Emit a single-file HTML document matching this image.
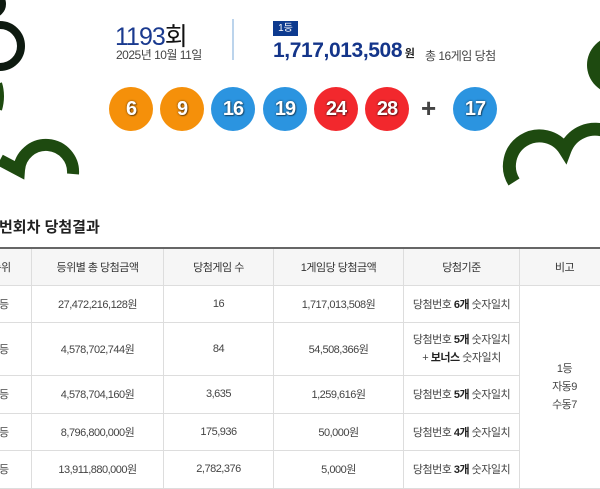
<!DOCTYPE html>
<html><head><meta charset="utf-8"><style>
*{margin:0;padding:0;box-sizing:border-box}
body{width:600px;height:489px;overflow:hidden;background:#fff;font-family:"Liberation Sans","Noto Sans CJK KR",sans-serif;position:relative;color:#333}
.a{position:absolute}
.ball{position:absolute;top:87px;width:44px;height:44px;border-radius:50%;color:#fff;font-weight:bold;font-size:20px;text-align:center;line-height:44px;letter-spacing:-1px;text-shadow:0 0 2px rgba(0,0,0,.6),1px 1px 1px rgba(0,0,0,.4)}
.o{background:#f5900a}.b{background:#2b94e0}.r{background:#f2282d}
table{position:absolute;left:-30px;top:247px;width:639px;table-layout:fixed;border-collapse:collapse;font-size:11px;color:#444;letter-spacing:-0.5px;border-top:2px solid #666}
td,th{border:1px solid #ddd;text-align:center;font-weight:normal;white-space:nowrap}
th{background:#f6f6f6;color:#333;height:37px}
b{color:#222}
</style></head><body>
<svg class="a" style="left:0;top:0" width="600" height="200">
<circle cx="0" cy="46" r="21" fill="none" stroke="#0e1a10" stroke-width="8"/>
<circle cx="-8" cy="4" r="11" fill="none" stroke="#0e1a10" stroke-width="6"/>
<path d="M0,83 Q4,96 0,110" fill="none" stroke="#1e4a10" stroke-width="4"/>
<path d="M0,160 L19,170 A27,27 0 0 1 73,174" fill="none" stroke="#1e4a10" stroke-width="12"/>
<circle cx="616" cy="65" r="29" fill="#1e4a10"/>
<path d="M514,182 A27,27 0 0 1 565,150 A32,32 0 0 1 608,132" fill="none" stroke="#1e4a10" stroke-width="13"/>
</svg>
<div class="a" style="left:115px;top:17px;font-size:25px;color:#1a3a8f;letter-spacing:-1px">1193<span style="color:#111">회</span></div>
<div class="a" style="left:116px;top:46px;font-size:12px;color:#444;letter-spacing:-0.5px">2025년 10월 11일</div>
<div class="a" style="left:232px;top:19px;width:2px;height:41px;background:#bcd4ec"></div>
<div class="a" style="left:273px;top:21px;width:25px;height:15px;background:#0d3a8f;color:#fff;font-size:10px;text-align:center;line-height:15px">1등</div>
<div class="a" style="left:273px;top:39px;font-size:21px;font-weight:bold;color:#14358a;letter-spacing:-0.4px;white-space:nowrap">1,717,013,508<span style="font-size:11px;color:#222"> 원</span></div>
<div class="a" style="left:425px;top:47px;font-size:12px;color:#444;letter-spacing:-0.5px">총 16게임 당첨</div>
<div class="ball o" style="left:109px">6</div>
<div class="ball o" style="left:160px">9</div>
<div class="ball b" style="left:211px">16</div>
<div class="ball b" style="left:263px">19</div>
<div class="ball r" style="left:314px">24</div>
<div class="ball r" style="left:365px">28</div>
<div class="a" style="left:421px;top:93px;font-size:26px;font-weight:bold;color:#444">+</div>
<div class="ball b" style="left:453px">17</div>
<div class="a" style="left:-1px;top:216px;font-size:15px;font-weight:bold;color:#222">번회차 당첨결과</div>
<table>
<colgroup><col style="width:61px"><col style="width:132px"><col style="width:110px"><col style="width:130px"><col style="width:116px"><col style="width:90px"></colgroup>
<tr><th>순위</th><th>등위별 총 당첨금액</th><th>당첨게임 수</th><th>1게임당 당첨금액</th><th>당첨기준</th><th>비고</th></tr>
<tr style="height:37px"><td>1등</td><td>27,472,216,128원</td><td>16</td><td>1,717,013,508원</td><td>당첨번호 <b>6개</b> 숫자일치</td><td rowspan="5" style="line-height:18px">1등<br>자동9<br>수동7</td></tr>
<tr style="height:53px"><td>2등</td><td>4,578,702,744원</td><td>84</td><td>54,508,366원</td><td style="line-height:18px">당첨번호 <b>5개</b> 숫자일치<br>+ <b>보너스</b> 숫자일치</td></tr>
<tr style="height:38px"><td>3등</td><td>4,578,704,160원</td><td>3,635</td><td>1,259,616원</td><td>당첨번호 <b>5개</b> 숫자일치</td></tr>
<tr style="height:37px"><td>4등</td><td>8,796,800,000원</td><td>175,936</td><td>50,000원</td><td>당첨번호 <b>4개</b> 숫자일치</td></tr>
<tr style="height:38px"><td>5등</td><td>13,911,880,000원</td><td>2,782,376</td><td>5,000원</td><td>당첨번호 <b>3개</b> 숫자일치</td></tr>
</table>
</body></html>
